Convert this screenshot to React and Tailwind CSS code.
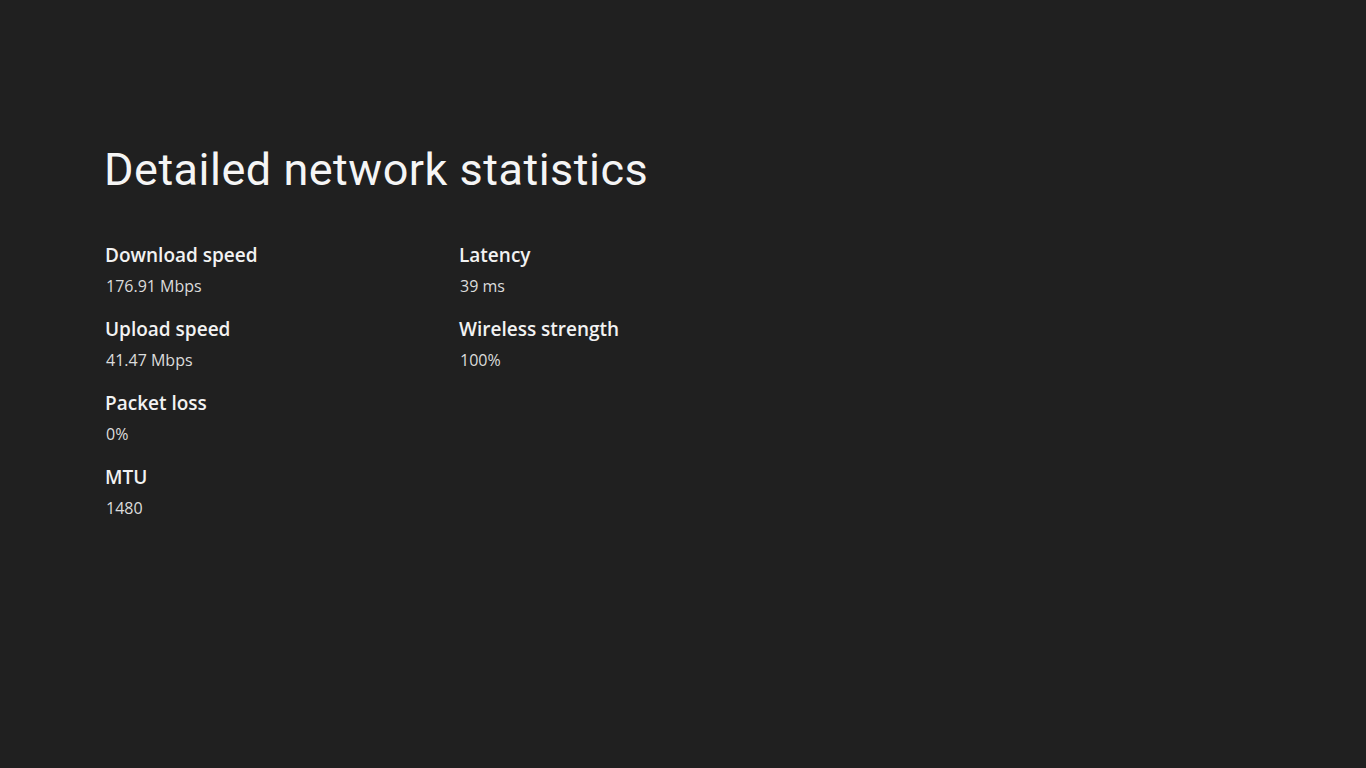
export default function App() {
  const left = [
    ["Download speed", "176.91 Mbps"],
    ["Upload speed", "41.47 Mbps"],
    ["Packet loss", "0%"],
    ["MTU", "1480"],
  ];
  const right = [
    ["Latency", "39 ms"],
    ["Wireless strength", "100%"],
  ];
  const Stat = ({ label, value }) => (
    <div className="flex flex-col h-[74px]">
      <div className="text-[19px] leading-[24px] font-semibold text-[#f2f2f2] pl-[1px]">{label}</div>
      <div className="text-[16px] leading-[24px] mt-[7px] text-[#dcdcdc] pl-[2px]">{value}</div>
    </div>
  );
  return (
    <div className="w-[1366px] h-[768px] bg-[#202020] overflow-hidden" style={{ fontFamily: '"Open Sans", "Noto Sans", sans-serif' }}>
      <div className="pl-[104px] pt-[140px]">
        <h1 className="text-[45px] leading-[60px] text-[#f5f5f5] font-normal tracking-[0.5px]" style={{ fontFamily: 'Roboto, "DejaVu Sans", sans-serif' }}>
          Detailed network statistics
        </h1>
        <div className="flex mt-[43px]">
          <div className="w-[354px] flex flex-col">
            {left.map(([l, v]) => <Stat key={l} label={l} value={v} />)}
          </div>
          <div className="flex flex-col">
            {right.map(([l, v]) => <Stat key={l} label={l} value={v} />)}
          </div>
        </div>
      </div>
    </div>
  );
}
